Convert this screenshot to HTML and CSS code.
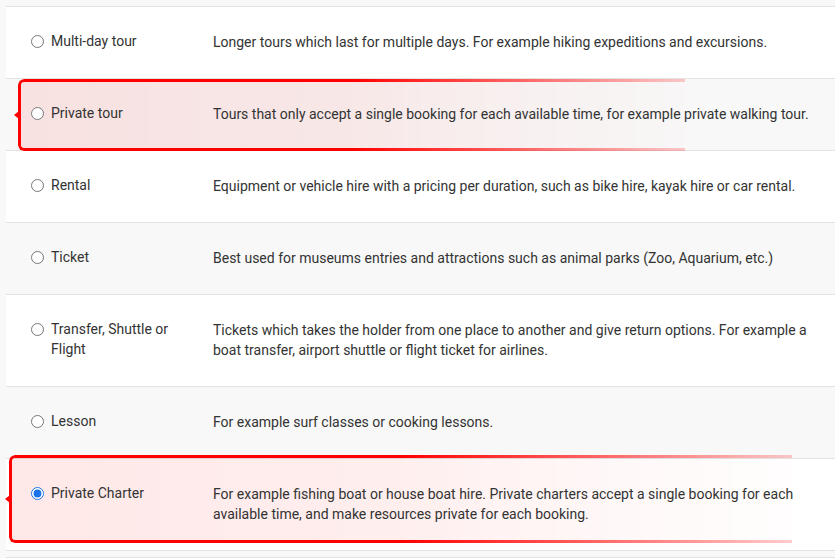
FILE: index.html
```html
<!DOCTYPE html>
<html lang="en">
<head>
  <meta charset="UTF-8">
  <meta name="viewport" content="width=device-width, initial-scale=1.0">
  <title>Product Type</title>
  <link rel="stylesheet" href="styles.css">
</head>
<body>

  <!-- Product type list -->
  <div class="type-list">
    <div class="type-row alt list-cut"></div>

    <label class="type-row">
      <span class="type-label"><input type="radio" name="type"><span>Multi-day tour</span></span>
      <span class="type-desc">Longer tours which last for multiple days. For example hiking expeditions and excursions.</span>
    </label>

    <label class="type-row alt">
      <span class="mark mark-tour"></span>
      <span class="type-label"><input type="radio" name="type"><span>Private tour</span></span>
      <span class="type-desc">Tours that only accept a single booking for each available time, for example private walking tour.</span>
    </label>

    <label class="type-row">
      <span class="type-label"><input type="radio" name="type"><span>Rental</span></span>
      <span class="type-desc">Equipment or vehicle hire with a pricing per duration, such as bike hire, kayak hire or car rental.</span>
    </label>

    <label class="type-row alt">
      <span class="type-label"><input type="radio" name="type"><span>Ticket</span></span>
      <span class="type-desc">Best used for museums entries and attractions such as animal parks (Zoo, Aquarium, etc.)</span>
    </label>

    <label class="type-row">
      <span class="type-label"><input type="radio" name="type"><span>Transfer, Shuttle or Flight</span></span>
      <span class="type-desc">Tickets which takes the holder from one place to another and give return options. For example a boat transfer, airport shuttle or flight ticket for airlines.</span>
    </label>

    <label class="type-row alt">
      <span class="type-label"><input type="radio" name="type"><span>Lesson</span></span>
      <span class="type-desc">For example surf classes or cooking lessons.</span>
    </label>

    <label class="type-row">
      <span class="mark mark-charter"></span>
      <span class="type-label"><input type="radio" name="type" checked><span>Private Charter</span></span>
      <span class="type-desc">For example fishing boat or house boat hire. Private charters accept a single booking for each available time, and make resources private for each booking.</span>
    </label>

    <div class="type-row alt list-cut"></div>
  </div>

</body>
</html>
```

FILE: styles.css
```css
body {
  margin: 0;
  background-color: #f8f8f8;
  font-family: Roboto, "Open Sans", Arial, sans-serif;
  font-size: 14px;
  line-height: 20px;
  color: #333;
  overflow: hidden;
}

.type-list {
  margin-left: 6px;
}

.type-row {
  position: relative;
  display: flex;
  padding: 24px 15px 26px 25px;
  background-color: #ffffff;
  border-bottom: 1px solid #e2e2e2;
  cursor: pointer;
}

.type-row.alt {
  background-color: #f8f8f8;
}

.type-row.list-cut {
  height: 6px;
  padding: 0;
}

.type-label {
  position: relative;
  z-index: 1;
  display: flex;
  align-items: flex-start;
  gap: 7px;
  width: 160px;
  flex-shrink: 0;
  margin-right: 22px;
}

.type-label input {
  margin: 4px 0 0 0;
  width: 13px;
  height: 13px;
  flex-shrink: 0;
  accent-color: #1a73e8;
}

.type-desc {
  position: relative;
  z-index: 1;
  flex: 1;
  padding-top: 1px;
}

/* red callout drawn over the row */
.mark {
  position: absolute;
  z-index: 0;
}

.mark::after {
  content: "";
  position: absolute;
  inset: 0;
  border: 3px solid #ff0000;
  border-right: none;
  border-radius: 6px 0 0 6px;
  background: linear-gradient(to right, rgba(255, 0, 0, 0.09), rgba(255, 0, 0, 0.04));
  -webkit-mask-image: linear-gradient(to right, #000 50%, rgba(0, 0, 0, 0.2));
  mask-image: linear-gradient(to right, #000 50%, rgba(0, 0, 0, 0.2));
}

.mark::before {
  content: "";
  position: absolute;
  left: -4px;
  top: 50%;
  transform: translateY(-50%);
  border-right: 5px solid #ff0000;
  border-top: 4px solid transparent;
  border-bottom: 4px solid transparent;
}

.mark-tour {
  left: 12px;
  top: 0;
  width: 667px;
  height: 72px;
}

.mark-charter {
  left: 3px;
  top: -4px;
  width: 783px;
  height: 88px;
}
```
